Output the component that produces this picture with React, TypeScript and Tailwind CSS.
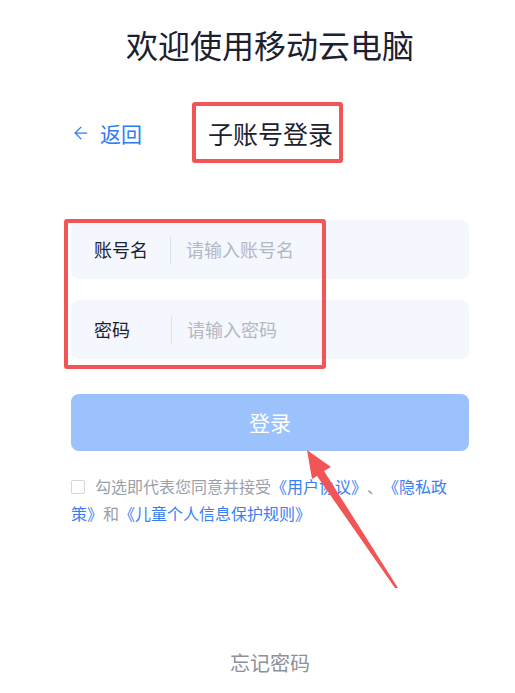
import { ArrowLeft } from 'lucide-react';

const font = { fontFamily: '"Noto Sans CJK SC", "Noto Sans", sans-serif' };

export default function App() {
  return (
    <div
      className="relative w-[515px] h-[693px] bg-white overflow-hidden"
      style={font}
    >
      <div className="ml-[71px] w-[398px] flex flex-col">
        {/* Title */}
        <h1 className="pt-[24px] text-center text-[32px] leading-[40px] text-[#1b2130] font-normal">
          欢迎使用移动云电脑
        </h1>

        {/* Back + sub title */}
        <div className="mt-[38px] flex items-center">
          <button className="w-[121px] flex items-center gap-[9px] text-[#2d7cf6] text-[21px] leading-[28px]">
            <ArrowLeft className="w-[20px] h-[20px]" strokeWidth={1.5} />
            <span>返回</span>
          </button>
          <div className="h-[61px] w-[151px] flex items-center pl-[12px] border-[4px] border-[#f25555] rounded-[3px]">
            <span className="text-[25px] leading-[32px] text-[#1b2130]">子账号登录</span>
          </div>
        </div>

        {/* Form */}
        <div className="relative mt-[57px] flex flex-col gap-[21px]">
          <div className="h-[59px] flex items-center px-[23px] rounded-[8px] bg-[#f4f7fe]">
            <span className="w-[76px] text-[18px] text-[#1b2130]">账号名</span>
            <span className="w-px h-[28px] bg-[#dde1e8]" />
            <span className="pl-[15px] text-[18px] text-[#b3b8c2]">请输入账号名</span>
          </div>
          <div className="h-[59px] flex items-center px-[23px] rounded-[8px] bg-[#f4f7fe]">
            <span className="w-[77px] text-[18px] text-[#1b2130]">密码</span>
            <span className="w-px h-[28px] bg-[#dde1e8]" />
            <span className="pl-[15px] text-[18px] text-[#b3b8c2]">请输入密码</span>
          </div>
          {/* annotation box */}
          <div className="absolute left-[-7px] top-[-1px] w-[262px] h-[150px] border-[4px] border-[#f25555] rounded-[3px] pointer-events-none" />
        </div>

        {/* Login button */}
        <button className="mt-[35px] h-[57px] rounded-[8px] bg-[#9bc2fd] text-white text-[21px]">
          登录
        </button>

        {/* Agreement */}
        <p className="mt-[22px] w-[385px] text-[16px] leading-[27px] text-[#9aa0aa] [text-spacing-trim:space-all]">
          <span className="inline-block w-[14px] h-[14px] mr-[10px] border border-[#d4d8e0] rounded-[2px] align-[-1px]" />
          勾选即代表您同意并接受<span className="text-[#3a7ef5]">《用户协议》</span>、<span className="text-[#3a7ef5]">《隐私政策》</span>和<span className="text-[#3a7ef5]">《儿童个人信息保护规则》</span>
        </p>

        {/* Forgot password */}
        <div className="mt-[122px] text-center text-[20px] leading-[28px] text-[#8c919b]">
          忘记密码
        </div>
      </div>

      {/* annotation arrow */}
      <svg
        className="absolute left-0 top-0 pointer-events-none"
        width="515"
        height="693"
        viewBox="0 0 515 693"
      >
        <polygon
          points="307,450 331,467 324,471 398,588 395,588 317,476 312,479"
          fill="#f25555"
        />
      </svg>
    </div>
  );
}
